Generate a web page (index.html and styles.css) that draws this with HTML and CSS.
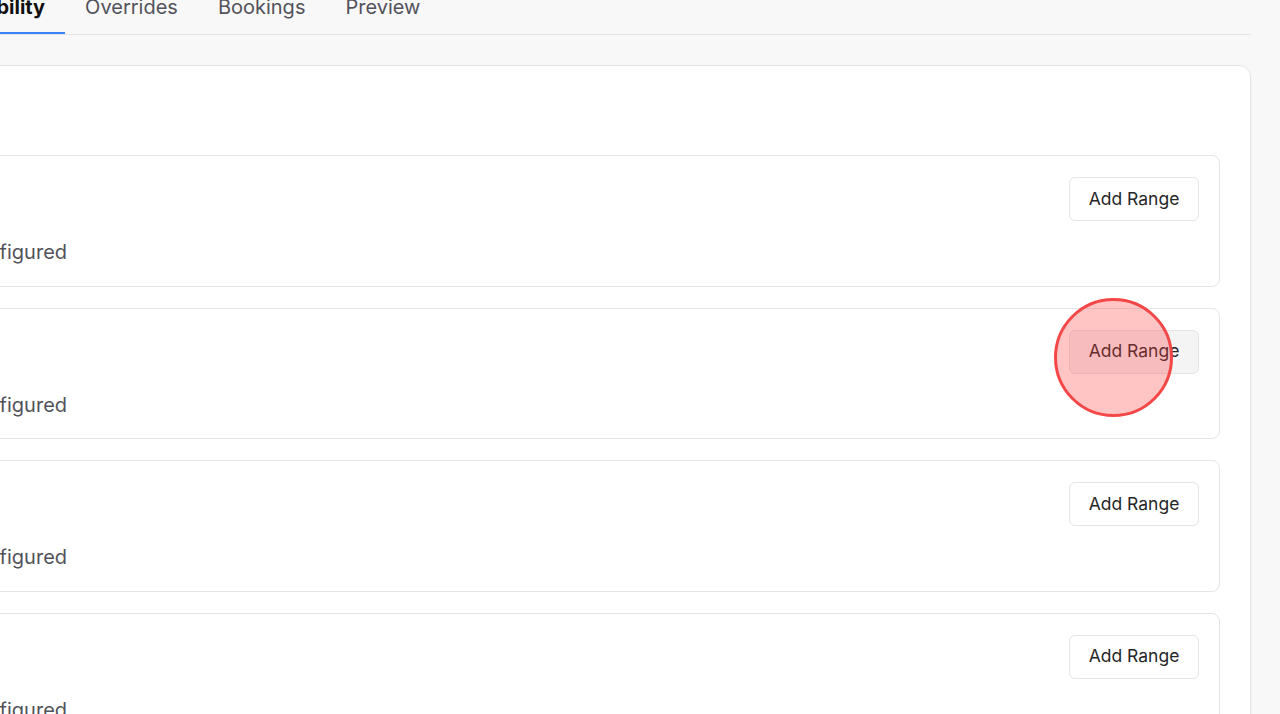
FILE: index.html
```html
<!DOCTYPE html>
<html lang="en">
<head>
    <meta charset="UTF-8">
    <meta name="viewport" content="width=device-width, initial-scale=1.0">
    <title>Availability</title>
    <link rel="stylesheet" href="styles.css">
</head>
<body>

<div class="page">
    <div class="tabs">
        <div class="tab active">Availability</div>
        <div class="tab">Overrides</div>
        <div class="tab">Bookings</div>
        <div class="tab">Preview</div>
    </div>

    <div class="card">
        <div class="card-head">Weekly Hours</div>

        <div class="day-list">
            <div class="day">
                <div class="day-top">
                    <span class="day-name">Monday</span>
                    <button class="btn">Add Range</button>
                </div>
                <div class="day-empty">No ranges configured</div>
            </div>
            <div class="day">
                <div class="day-top">
                    <span class="day-name">Tuesday</span>
                    <button class="btn hover">Add Range</button>
                </div>
                <div class="day-empty">No ranges configured</div>
            </div>
            <div class="day">
                <div class="day-top">
                    <span class="day-name">Wednesday</span>
                    <button class="btn">Add Range</button>
                </div>
                <div class="day-empty">No ranges configured</div>
            </div>
            <div class="day">
                <div class="day-top">
                    <span class="day-name">Thursday</span>
                    <button class="btn">Add Range</button>
                </div>
                <div class="day-empty">No ranges configured</div>
            </div>
        </div>
    </div>
</div>

<div class="click-dot"></div>

</body>
</html>
```

FILE: styles.css
```css
body {
    margin: 0;
    background: #f8f8f8;
    font-family: Inter, "Noto Sans", sans-serif;
    overflow: hidden;
}

.page {
    width: 1442px;
    margin-left: -191px;
    margin-top: -13px;
}

.tabs {
    display: flex;
    border-bottom: 1px solid #e4e4e4;
    padding-left: 108px;
}

.tab {
    padding: 8px 20px 13px;
    font-size: 20px;
    line-height: 24px;
    color: #52525b;
    border-bottom: 2px solid transparent;
}

.tab.active {
    color: #111;
    font-weight: 700;
    border-bottom-color: #3b82f6;
}

.card {
    margin-top: 30px;
    background: #fff;
    border: 1px solid #e4e4e4;
    border-radius: 12px;
    padding: 29px 30px 40px;
    box-shadow: 0 1px 3px rgba(0, 0, 0, 0.04);
}

.card-head {
    font-size: 20px;
    font-weight: 600;
    line-height: 40px;
    color: #111;
    margin-bottom: 20px;
}

.day-list {
    display: flex;
    flex-direction: column;
    gap: 21px;
}

.day {
    border: 1px solid #e4e4e4;
    border-radius: 8px;
    padding: 21px 20px 21.67px;
}

.day-top {
    display: flex;
    justify-content: space-between;
    align-items: center;
}

.day-name {
    font-size: 18px;
    font-weight: 600;
    color: #111;
}

.btn {
    font-family: Inter, "Noto Sans", sans-serif;
    font-size: 17.5px;
    color: #27272a;
    background: #fff;
    border: 1px solid #e4e4e7;
    border-radius: 6px;
    height: 44px;
    width: 130px;
    padding: 0 0 2px;
}

.btn.hover {
    background: #f4f4f5;
}

.day-empty {
    margin-top: 19px;
    font-size: 20px;
    line-height: 24px;
    color: #52525b;
}

.click-dot {
    position: absolute;
    left: 1054px;
    top: 298px;
    width: 113px;
    height: 113px;
    border-radius: 50%;
    border: 3px solid #f44848;
    background: rgba(255, 60, 60, 0.3);
}
```
